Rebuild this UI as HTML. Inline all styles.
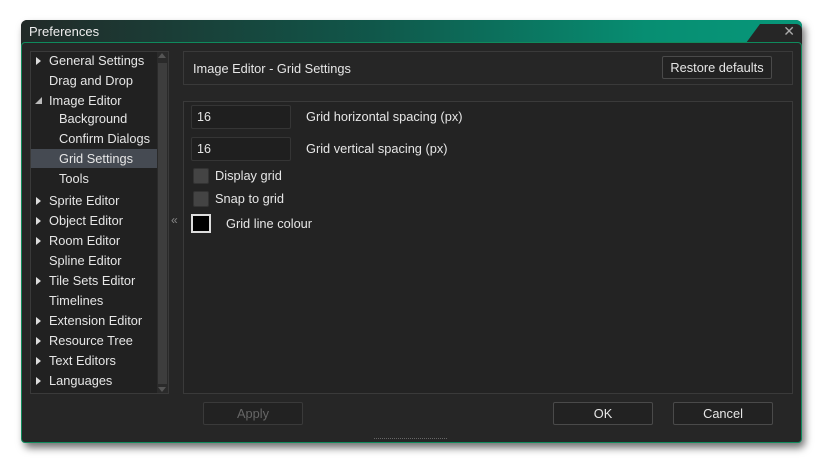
<!DOCTYPE html>
<html><head><style>
*{box-sizing:border-box;margin:0;padding:0}
body{width:822px;height:463px;background:#fff;font-family:"Liberation Sans",sans-serif;font-size:12.5px;color:#e6e6e6;position:relative;overflow:hidden}
.win{position:absolute;left:21px;top:20px;width:781px;height:423px;border-radius:6px;background:#262626;box-shadow:3px 5px 8px rgba(0,0,0,.55)}
.title{position:absolute;left:0;top:0;width:781px;height:23px;border-radius:6px 6px 0 0;background:linear-gradient(90deg,#222a28 0%,#10574a 45%,#078e72 80%,#07987a 100%)}
.title span{position:absolute;left:8px;top:4px;font-size:13px;color:#eee}
.tab{position:absolute;right:0;top:4px;width:56px;height:19px;background:#262626;clip-path:polygon(14px 0,100% 0,100% 100%,0 100%);border-radius:0 6px 0 0}
.x{position:absolute;right:7px;top:3px;font-size:14px;color:#aaa}
.bodyb{position:absolute;left:0;top:22px;width:781px;height:401px;border:1px solid #0f8a5c;border-radius:4px;background:#262626}
.p{position:absolute;background:#232323;border:1px solid #3a3a3a}
.t{position:absolute;white-space:nowrap;font-size:12.8px}
.arr{position:absolute;width:0;height:0;border-top:4.5px solid transparent;border-bottom:4.5px solid transparent;border-left:5px solid #ddd}
.btn{position:absolute;height:23px;border:1px solid #4a4a4a;border-radius:2px;background:#222;text-align:center;line-height:21px;font-size:12.8px}
.in{position:absolute;width:100px;height:24px;background:#1f1f1f;border:1px solid #353535;border-radius:2px;padding-left:5px;line-height:22px}
.cb{position:absolute;width:16px;height:16px;background:#444;border:1px solid #333;border-radius:2px}
</style></head><body>
<div class="win">
<div class="title"><span>Preferences</span></div>
<div class="tab"></div><div class="x">✕</div>
<div class="bodyb"></div>
</div>
<div class="p" style="left:30px;top:51px;width:139px;height:343px;background:#212121"></div>
<div style="position:absolute;left:31px;top:149px;width:126px;height:19px;background:#454a52"></div>
<div style="position:absolute;left:157px;top:52px;width:11px;height:341px;background:#2a2a2a"></div>
<div style="position:absolute;left:158px;top:63px;width:9px;height:321px;background:#3d3d3d"></div>
<div style="position:absolute;left:158px;top:53px;border-left:4px solid transparent;border-right:4px solid transparent;border-bottom:5px solid #555"></div>
<div style="position:absolute;left:158px;top:387px;border-left:4px solid transparent;border-right:4px solid transparent;border-top:5px solid #555"></div>
<div class="arr" style="left:36px;top:57px"></div><div class="t" style="left:49px;top:53px">General Settings</div>
<div class="t" style="left:49px;top:73px">Drag and Drop</div>
<div style="position:absolute;left:35px;top:97px;border-left:7px solid transparent;border-bottom:7px solid #bbb"></div><div class="t" style="left:49px;top:93px">Image Editor</div>
<div class="t" style="left:59px;top:111px">Background</div>
<div class="t" style="left:59px;top:131px">Confirm Dialogs</div>
<div class="t" style="left:59px;top:151px">Grid Settings</div>
<div class="t" style="left:59px;top:171px">Tools</div>
<div class="arr" style="left:36px;top:197px"></div><div class="t" style="left:49px;top:193px">Sprite Editor</div>
<div class="arr" style="left:36px;top:217px"></div><div class="t" style="left:49px;top:213px">Object Editor</div>
<div class="arr" style="left:36px;top:237px"></div><div class="t" style="left:49px;top:233px">Room Editor</div>
<div class="t" style="left:49px;top:253px">Spline Editor</div>
<div class="arr" style="left:36px;top:277px"></div><div class="t" style="left:49px;top:273px">Tile Sets Editor</div>
<div class="t" style="left:49px;top:293px">Timelines</div>
<div class="arr" style="left:36px;top:317px"></div><div class="t" style="left:49px;top:313px">Extension Editor</div>
<div class="arr" style="left:36px;top:337px"></div><div class="t" style="left:49px;top:333px">Resource Tree</div>
<div class="arr" style="left:36px;top:357px"></div><div class="t" style="left:49px;top:353px">Text Editors</div>
<div class="arr" style="left:36px;top:377px"></div><div class="t" style="left:49px;top:373px">Languages</div>
<div class="t" style="left:171px;top:213px;color:#888;font-size:12px">«</div>
<div class="p" style="left:183px;top:51px;width:610px;height:34px;background:#262626"></div>
<div class="t" style="left:193px;top:61px">Image Editor - Grid Settings</div>
<div class="btn" style="left:662px;top:56px;width:110px">Restore defaults</div>
<div class="p" style="left:183px;top:101px;width:610px;height:293px"></div>
<div class="in" style="left:191px;top:105px">16</div><div class="t" style="left:306px;top:109px">Grid horizontal spacing (px)</div>
<div class="in" style="left:191px;top:137px">16</div><div class="t" style="left:306px;top:141px">Grid vertical spacing (px)</div>
<div class="cb" style="left:193px;top:168px"></div><div class="t" style="left:215px;top:168px">Display grid</div>
<div class="cb" style="left:193px;top:191px"></div><div class="t" style="left:215px;top:191px">Snap to grid</div>
<div style="position:absolute;left:191px;top:214px;width:20px;height:19px;background:#000;border:2px solid #ddd"></div><div class="t" style="left:226px;top:216px">Grid line colour</div>
<div class="btn" style="left:203px;top:402px;width:100px;color:#666;border-color:#3a3a3a">Apply</div>
<div class="btn" style="left:553px;top:402px;width:100px">OK</div>
<div class="btn" style="left:673px;top:402px;width:100px">Cancel</div>
<div style="position:absolute;left:374px;top:438px;width:73px;height:2px;border-top:1px dotted #666"></div>
</body></html>
